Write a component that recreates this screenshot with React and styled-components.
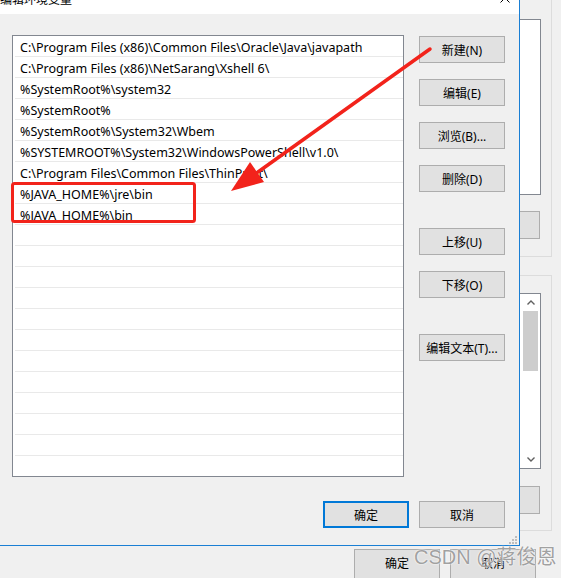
import React from 'react'
import styled, { createGlobalStyle } from 'styled-components'

const GlobalStyle = createGlobalStyle`
  html, body {
    margin: 0;
    padding: 0;
  }
  body {
    width: 561px;
    height: 578px;
    overflow: hidden;
    background: #f0f0f0;
    font-family: "Noto Sans", "Noto Sans CJK SC", sans-serif;
  }
`

const Screen = styled.div`
  position: relative;
  width: 561px;
  height: 578px;
  display: flex;
  flex-direction: column;
  background: #f0f0f0;
  overflow: hidden;
`

const TopArea = styled.div`
  display: flex;
  height: 546px;
`

const Dialog = styled.div`
  width: 519px;
  height: 545px;
  border-right: 1px solid #1a7fd4;
  border-bottom: 1px solid #1a7fd4;
  display: flex;
  flex-direction: column;
  background: #f0f0f0;
`

const TitleBar = styled.div`
  height: 14px;
  flex: none;
  background: #fff;
  overflow: hidden;
  display: flex;
  justify-content: space-between;
  align-items: flex-start;
  padding-right: 9px;
`

const TitleText = styled.div`
  margin-top: -7px;
  font-family: "Noto Sans CJK SC", sans-serif;
  font-size: 12px;
  line-height: 12px;
  color: #000;
`

const CloseIcon = styled.svg`
  margin-top: -7px;
  flex: none;
`

const Body = styled.div`
  flex: 1;
  display: flex;
  flex-direction: column;
  padding: 21px 14px 0 12px;
`

const MainRow = styled.div`
  display: flex;
  gap: 15px;
  align-items: flex-start;
`

const List = styled.div`
  width: 390px;
  height: 440px;
  border: 1px solid #828790;
  background: #fff;
  overflow: hidden;
  flex: none;
`

const Row = styled.div`
  height: 18px;
  padding-top: 2px;
  margin-left: 2px;
  padding-left: 5px;
  border-bottom: 1px solid #e9e9e9;
  font-size: 12.5px;
  line-height: 20px;
  color: #000;
  white-space: nowrap;
`

const ButtonColumn = styled.div`
  display: flex;
  flex-direction: column;
  gap: 36px;
  margin-top: 1px;
`

const ButtonGroup = styled.div`
  display: flex;
  flex-direction: column;
  gap: 16px;
`

const Button = styled.div`
  box-sizing: border-box;
  width: 86px;
  height: 27px;
  display: flex;
  align-items: center;
  justify-content: center;
  background: #e1e1e1;
  border: ${p => (p.$primary ? '2px solid #0078d7' : '1px solid #adadad')};
  font-family: "Noto Sans", "Noto Sans CJK SC", sans-serif;
  font-size: 12px;
  color: #000;
  flex: none;
`

const Footer = styled.div`
  display: flex;
  justify-content: flex-end;
  gap: 10px;
  margin-top: 24px;
`

const GripRow = styled.div`
  display: flex;
  justify-content: flex-end;
  margin-top: 8px;
  margin-right: -12px;
`

const SideStrip = styled.div`
  width: 41px;
  display: flex;
  flex-direction: column;
`

const GroupBox = styled.div`
  width: 32px;
  height: ${p => p.$height}px;
  margin-top: ${p => p.$top || 0}px;
  border-right: 1px solid #dcdcdc;
  border-bottom: 1px solid #dcdcdc;
  border-top: ${p => (p.$open ? 'none' : '1px solid #dcdcdc')};
  display: flex;
  flex-direction: column;
  box-sizing: border-box;
`

const SideBox = styled.div`
  width: 20px;
  height: ${p => p.$height}px;
  margin-top: ${p => p.$top}px;
  border: 1px solid #828790;
  border-left: none;
  background: #fff;
  display: flex;
  flex-direction: column;
  align-items: flex-end;
  flex: none;
`

const SideButton = styled.div`
  width: 19px;
  height: 26px;
  margin-top: ${p => p.$top}px;
  background: #e1e1e1;
  border: 1px solid #adadad;
  border-left: none;
  flex: none;
`

const ScrollBar = styled.div`
  width: 15px;
  height: 100%;
  margin-right: 2px;
  display: flex;
  flex-direction: column;
  align-items: center;
`

const ScrollArrow = styled.div`
  height: 17px;
  display: flex;
  align-items: center;
  justify-content: center;
  flex: none;
`

const ScrollTrack = styled.div`
  flex: 1;
  width: 15px;
`

const ScrollThumb = styled.div`
  width: 15px;
  height: 60px;
  background: #cdcdcd;
`

const BottomStrip = styled.div`
  flex: 1;
  display: flex;
  gap: 10px;
  padding: 3px 0 0 354px;
`

const BottomButton = styled(Button)`
  height: 32px;
  align-items: flex-start;
  padding-top: 5px;
  line-height: 17px;
`

const Annotations = styled.svg`
  position: absolute;
  left: 0;
  top: 0;
  pointer-events: none;
`

const Watermark = styled.div`
  position: absolute;
  left: 414px;
  top: 545px;
  font-family: "Liberation Sans", "Noto Sans CJK SC", sans-serif;
  font-size: 20px;
  line-height: 24px;
  color: rgba(130, 130, 130, 0.75);
  text-shadow: 0 0 1px #fff, 0 0 2px #fff;
  white-space: nowrap;
  pointer-events: none;
`

const paths = [
  'C:\\Program Files (x86)\\Common Files\\Oracle\\Java\\javapath',
  'C:\\Program Files (x86)\\NetSarang\\Xshell 6\\',
  '%SystemRoot%\\system32',
  '%SystemRoot%',
  '%SystemRoot%\\System32\\Wbem',
  '%SYSTEMROOT%\\System32\\WindowsPowerShell\\v1.0\\',
  'C:\\Program Files\\Common Files\\ThinPrint\\',
  '%JAVA_HOME%\\jre\\bin',
  '%JAVA_HOME%\\bin',
]

const rows = [...paths, ...Array(21 - paths.length).fill('')]

function Chevron({ down }) {
  return (
    <svg width="8" height="5" viewBox="0 0 8 5">
      <polyline
        points={down ? '0.5,0.5 4,4 7.5,0.5' : '0.5,4.5 4,1 7.5,4.5'}
        fill="none"
        stroke="#606060"
        strokeWidth="1.4"
      />
    </svg>
  )
}

function Grip() {
  const dots = [[6, 0], [3, 3], [6, 3], [0, 6], [3, 6], [6, 6]]
  return (
    <svg width="8" height="8" viewBox="0 0 8 8">
      {dots.map(([x, y]) => (
        <rect key={`${x}-${y}`} x={x} y={y} width="2" height="2" fill="#bdbdbd" />
      ))}
    </svg>
  )
}

export default function App() {
  return (
    <>
      <GlobalStyle />
      <Screen>
        <TopArea>
          <Dialog>
            <TitleBar>
              <TitleText>编辑环境变量</TitleText>
              <CloseIcon width="10" height="10" viewBox="0 0 10 10">
                <path d="M0.5 0.5 L9.5 9.5 M9.5 0.5 L0.5 9.5" stroke="#000" strokeWidth="1" />
              </CloseIcon>
            </TitleBar>
            <Body>
              <MainRow>
                <List>
                  {rows.map((text, i) => (
                    <Row key={i}>{text}</Row>
                  ))}
                </List>
                <ButtonColumn>
                  <ButtonGroup>
                    <Button>新建(N)</Button>
                    <Button>编辑(E)</Button>
                    <Button>浏览(B)...</Button>
                    <Button>删除(D)</Button>
                  </ButtonGroup>
                  <ButtonGroup>
                    <Button>上移(U)</Button>
                    <Button>下移(O)</Button>
                  </ButtonGroup>
                  <ButtonGroup>
                    <Button>编辑文本(T)...</Button>
                  </ButtonGroup>
                </ButtonColumn>
              </MainRow>
              <Footer>
                <Button $primary>确定</Button>
                <Button>取消</Button>
              </Footer>
              <GripRow>
                <Grip />
              </GripRow>
            </Body>
          </Dialog>

          <SideStrip>
            <GroupBox $height={257} $open>
              <SideBox $top={19} $height={174} />
              <SideButton $top={16} />
            </GroupBox>
            <GroupBox $height={256} $top={18}>
              <SideBox $top={17} $height={174}>
                <ScrollBar>
                  <ScrollArrow>
                    <Chevron />
                  </ScrollArrow>
                  <ScrollTrack>
                    <ScrollThumb />
                  </ScrollTrack>
                  <ScrollArrow>
                    <Chevron down />
                  </ScrollArrow>
                </ScrollBar>
              </SideBox>
              <SideButton $top={17} />
            </GroupBox>
          </SideStrip>
        </TopArea>

        <BottomStrip>
          <BottomButton>确定</BottomButton>
          <BottomButton>取消</BottomButton>
        </BottomStrip>

        <Annotations width="561" height="578" viewBox="0 0 561 578">
          <rect x="12.5" y="183.5" width="182" height="38" rx="2" fill="none" stroke="#f2231b" strokeWidth="3" />
          <line x1="430" y1="49" x2="258" y2="172" stroke="#f2231b" strokeWidth="3.5" strokeLinecap="round" />
          <polygon points="231,191 264,182 250,162" fill="#f2231b" />
        </Annotations>

        <Watermark>CSDN @蒋俊恩</Watermark>
      </Screen>
    </>
  )
}
